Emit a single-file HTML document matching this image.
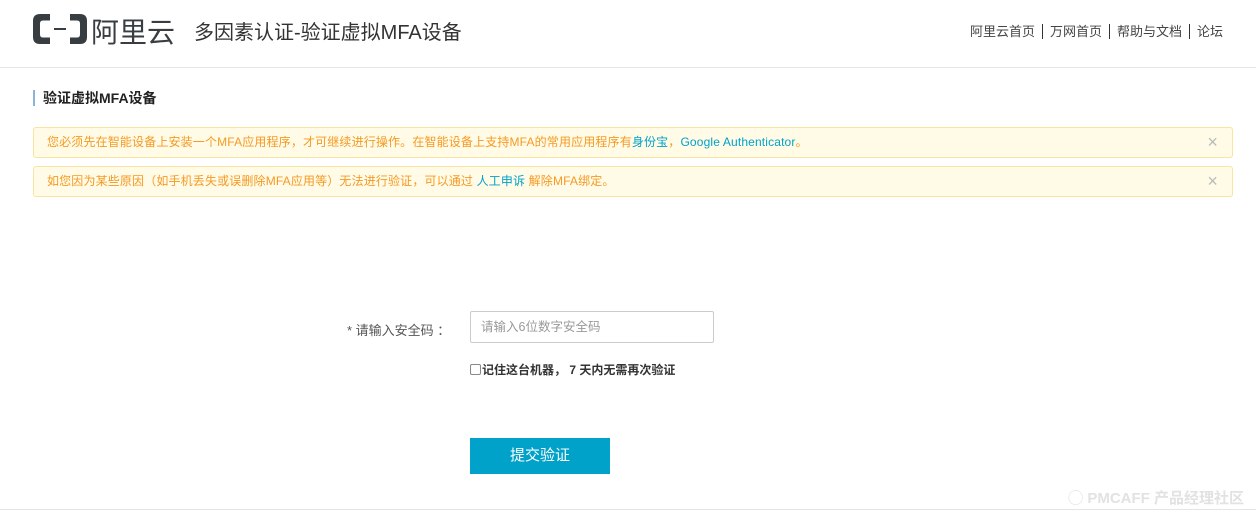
<!DOCTYPE html>
<html><head><meta charset="utf-8"><style>
*{margin:0;padding:0;box-sizing:border-box}
body{width:1256px;height:519px;background:#fff;font-family:"Liberation Sans","Noto Sans CJK SC",sans-serif;position:relative;overflow:hidden;color:#333}
.hdr{position:absolute;left:0;top:0;width:1256px;height:68px;border-bottom:1px solid #e5e5e5}
.logo{position:absolute;left:33px;top:13px}
.brand{position:absolute;left:91px;top:11px;font-size:28px;color:#373d41;font-weight:normal;letter-spacing:0px}
.title{position:absolute;left:194px;top:16px;font-size:20px;color:#333}
.nav{position:absolute;right:33px;top:21px;font-size:13px;color:#444}
.nav span{padding:0 7px;border-left:1px solid #333}
.nav span:first-child{border:none}
.nav span:last-child{padding-right:0}
.sec{position:absolute;left:33px;top:90px;border-left:2px solid #8cb4d6;padding-left:8px;font-size:14px;font-weight:bold;height:16px;line-height:16px;color:#222}
.alert{position:absolute;left:33px;width:1200px;height:31px;background:#fffbe6;border:1px solid #fbe3a0;border-radius:3px;font-size:12px;color:#f59a23;line-height:29px;padding-left:13px;letter-spacing:0.15px}
.alert a{color:#00a2ca}
.alert i{position:absolute;right:14px;top:0;font-style:normal;font-size:18px;color:#bbb}
.lbl{position:absolute;left:347px;top:320px;font-size:13px;color:#555}
.inp{position:absolute;left:470px;top:311px;width:244px;height:32px;border:1px solid #ccc;border-radius:2px;font-size:12.5px;color:#999;line-height:30px;padding-left:10px}
.chk{position:absolute;left:470px;top:361px;font-size:12px;font-weight:bold;color:#333;display:flex;align-items:center}
.chk b{display:inline-block;width:11px;height:11px;border:1px solid #888;border-radius:2px;margin-right:1px}
.btn{position:absolute;left:470px;top:438px;width:140px;height:36px;background:#00a2ca;color:#fff;font-size:15px;text-align:center;line-height:36px}
.wm{position:absolute;right:12px;top:487px;font-size:15px;color:#e2e2e2;font-weight:bold}
.foot{position:absolute;left:0;top:509px;width:1256px;border-top:1px solid #e5e5e5}
</style></head><body>
<div class="hdr">
<svg class="logo" width="54" height="32" viewBox="0 0 54 32"><path d="M17 1H7Q0 1 0 8V24Q0 31 7 31H17V24.5H10Q7 24.5 7 21.5V10.5Q7 7.5 10 7.5H17Z M37 1H47Q54 1 54 8V24Q54 31 47 31H37V24.5H44Q47 24.5 47 21.5V10.5Q47 7.5 44 7.5H37Z" fill="#373d41"/><rect x="21" y="15" width="12" height="2" fill="#373d41"/></svg>
<div class="brand">阿里云</div>
<div class="title">多因素认证-验证虚拟MFA设备</div>
<div class="nav"><span>阿里云首页</span><span>万网首页</span><span>帮助与文档</span><span>论坛</span></div>
</div>
<div class="sec">验证虚拟MFA设备</div>
<div class="alert" style="top:127px">您必须先在智能设备上安装一个MFA应用程序，才可继续进行操作。在智能设备上支持MFA的常用应用程序有<a>身份宝</a>，<a>Google Authenticator</a>。<i>×</i></div>
<div class="alert" style="top:166px">如您因为某些原因（如手机丢失或误删除MFA应用等）无法进行验证，可以通过 <a>人工申诉</a> 解除MFA绑定。<i>×</i></div>
<div class="lbl">* 请输入安全码 ：</div>
<div class="inp">请输入6位数字安全码</div>
<div class="chk"><b></b>记住这台机器， 7 天内无需再次验证</div>
<div class="btn">提交验证</div>
<div class="wm">◯ PMCAFF 产品经理社区</div>
<div class="foot"></div>
</body></html>
